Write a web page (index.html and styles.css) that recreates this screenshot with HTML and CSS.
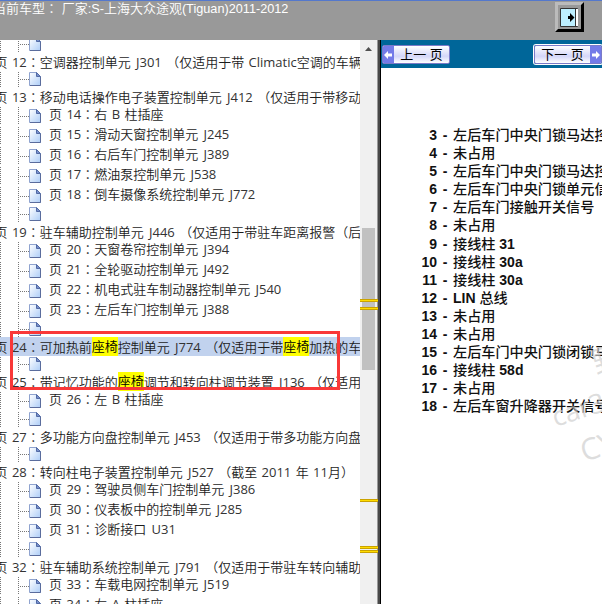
FILE: index.html
```html
<!DOCTYPE html>
<html lang="zh-CN">
<head>
<meta charset="utf-8">
<title>Tiguan</title>
<link rel="stylesheet" href="styles.css">
</head>
<body>
<header class="top"><span class="model">当前车型<span class="colon" lang="zh-TW">：</span> 厂家<b>:S-</b>上海大众途观<b>(Tiguan)2011-2012</b></span>
<button class="exit" aria-label="Exit"><svg width="19" height="19"><path fill="#bdefff" stroke="#333" d="M.5.5h17v18H.5z"/><path fill="#fff" d="M15 1h3v17h-3z"/><path stroke="#333" d="M15.500 1v17"/><path d="M8 8h2V5l4.500 4.500L10 14v-3H8z"/></svg></button></header>
<main class="panes">
<nav class="tree" id="tree"></nav>
<div class="scroll"><svg class="up" width="17" height="17"><path fill="#505050" d="M5 11l3.500-4 3.500 4z"/></svg><div class="thumb"></div><i class="hit h1"></i><i class="hit h2"></i><i class="hit h3"></i><i class="hit h4"></i><i class="hit h5"></i></div>
<div class="split"></div>
<section class="doc">
<div class="bar"><button class="pg prev"><svg width="11" height="18"><path fill="#747be8" d="M0 0h11v18H0z"/><path fill="#fff" d="M1 9l4-4v2.500h4v3H5V13z"/></svg><span>上一 页</span></button><button class="pg next"><span>下一 页</span><svg width="11" height="18"><path fill="#747be8" d="M0 0h11v18H0z"/><path fill="#fff" d="M10 9L6 5v2.500H2v3h4V13z"/></svg></button></div>
<ol class="pins" id="pins"></ol>
<div class="mark m1">野</div><div class="mark m2">car3</div><div class="mark m3">CY</div>
</section>
</main>
<div class="frame"></div>
<script src="tree.js"></script>
</body>
</html>
```
FILE: styles.css
```css
*{box-sizing:border-box}
body{margin:0;width:602px;height:604px;overflow:hidden;position:relative;background:#fff;display:flex;flex-direction:column}
.top{height:40px;flex:none;background:#999;border-top:1px solid #5478cc;color:#fff;display:flex;justify-content:space-between;align-items:flex-start;padding-right:18px;overflow:hidden}
.model{font:13px/16px "Liberation Sans","Noto Sans CJK SC",sans-serif;font-weight:350;margin:-1px 0 0 -7px;white-space:nowrap}
.model b{font:12.7px/16px "Liberation Sans",sans-serif}
.exit{width:29px;height:30px;margin-top:1px;padding:0;background:#999;border:solid;border-width:3px;border-color:#bbb #000 #000 #bbb;display:flex;align-items:center;justify-content:center}
.panes{display:flex;flex:1;min-height:0}
.tree{width:360px;flex:none;overflow:hidden;font:13px/19px "Open Sans","Noto Sans CJK SC",sans-serif;font-weight:350;color:#1c1c1c;white-space:nowrap;word-spacing:1px}
.tree p{margin:0}
.tree i{font-style:normal;font-weight:400;color:#333}
.tree i.w{margin-left:.8px}
.colon{font-family:"Noto Sans CJK TC",sans-serif}
.head{height:19px}
.head .t{margin-left:-5.5px}
.on{background:#c1d2ee}
mark{background:#ff0;color:#000;display:inline-block;height:19px;vertical-align:top}
.leaf,.empty{display:flex}
.leaf{height:20px;line-height:15px}
.empty{height:16px}
.empty:first-child{margin-top:-4px}
.leaf .t{margin-left:8px}
.tree svg{flex:none}
.scroll{width:17px;background:#f0f0f0;position:relative;flex:none}
.up{display:block}
.thumb{margin:171px 2px 0;height:142px;background:#c1c1c1}
.hit{position:absolute;left:0;width:18px;height:3px;background:#ffdc00;border:solid #caa200;border-width:1px 0}
.h1{top:259px}.h2{top:267px}.h3{top:459px}.h4{top:506px}.h5{top:510px}
.split{width:4px;flex:none;background:linear-gradient(90deg,#999 1px,#484848 1px 3px,#000 3px)}
.doc{flex:1;min-width:0;overflow:hidden;position:relative}
.bar{height:28px;background:#069;display:flex;justify-content:space-between;padding:5px 0 0 1px}
.pg{width:68px;height:19px;padding:0;border:1px solid #7a7ac8;border-radius:2px;background:linear-gradient(#fff,#d4d6f8 60%,#fff);display:flex;align-items:center;font:13px/17px "Liberation Sans","Noto Sans CJK SC",sans-serif;color:#000;overflow:hidden}
.next{box-shadow:0 0 0 1px #fff}
.pg span{flex:1;text-align:center;white-space:nowrap}
.pins{list-style:none;margin:58px 0 0;padding:0;font:bold 14px/18.1px "Liberation Sans","Noto Sans CJK SC",sans-serif;color:#111;white-space:nowrap}
.pins li{display:flex;height:18.1px}
.pins span{flex:none}
.num{width:56px;text-align:right}
.dash{width:16px;text-align:center}
.pins em{font-style:normal;font-weight:500;font-size:14.15px}
.mark{position:absolute;font:30px/34px "Open Sans","Noto Sans CJK SC",sans-serif;color:#ccca;transform:rotate(-18deg);white-space:nowrap}
.m1{left:211px;top:302px}.m2{left:170px;top:352px;font-size:27px}.m3{left:199px;top:389px}
.frame{position:absolute;left:10px;top:331px;width:330px;height:59px;border:3px solid #f93838}
```
FILE: tree.js
```javascript
const rows = [
  [''],
  ['h', 12, '空调器控制单元 J301 （仅适用于带 Climatic空调的车辆'], [''],
  ['h', 13, '移动电话操作电子装置控制单元 J412 （仅适用于带移动'],
  ['l', 14, '右 B 柱插座'], ['l', 15, '滑动天窗控制单元 J245'], ['l', 16, '右后车门控制单元 J389'],
  ['l', 17, '燃油泵控制单元 J538'], ['l', 18, '倒车摄像系统控制单元 J772'], [''],
  ['h', 19, '驻车辅助控制单元 J446 （仅适用于带驻车距离报警（后'],
  ['l', 20, '天窗卷帘控制单元 J394'], ['l', 21, '全轮驱动控制单元 J492'],
  ['l', 22, '机电式驻车制动器控制单元 J540'], ['l', 23, '左后车门控制单元 J388'], [''],
  ['s', 24, '可加热前座椅控制单元 J774 （仅适用于带座椅加热的车'], [''],
  ['h', 25, '带记忆功能的座椅调节和转向柱调节装置 J136 （仅适用'],
  ['l', 26, '左 B 柱插座'], [''],
  ['h', 27, '多功能方向盘控制单元 J453 （仅适用于带多功能方向盘'], [''],
  ['h', 28, '转向柱电子装置控制单元 J527 （截至 2011 年 11月）'],
  ['l', 29, '驾驶员侧车门控制单元 J386'], ['l', 30, '仪表板中的控制单元 J285'], ['l', 31, '诊断接口 U31'], [''],
  ['h', 32, '驻车辅助系统控制单元 J791 （仅适用于带驻车转向辅助'],
  ['l', 33, '车载电网控制单元 J519'], ['l', 34, '左 A 柱插座']
];
const icon = y => `<svg width="41" height="${y === 3 ? 20 : 16}">
<path d="M.5 1v${y === 3 ? 18 : 15}M18.500 1v${y === 3 ? 18 : 15}M20 ${y + 7.5}h9" stroke="#777" stroke-dasharray="1 1" fill="none"/>
<g transform="translate(29 ${y})"><path d="M.5.5h7l4 4v9H.5z" fill="url(#paper)" stroke="#8fa3cf"/><path d="M7.500.5v4h4z" fill="#7891cc" stroke="#526aa5"/><path d="M1 13.500h10.500V5" stroke="#5a6c9c" fill="none"/></g></svg>`;
const wrap = s => s.replace(/[A-Za-z0-9]+/g, m => `<i${/^[JU]/.test(m) ? ' class="w"' : ''}>${m}</i>`)
  .replaceAll('座椅', '<mark>座椅</mark>').replace(/（/g, '<span class="colon" lang="zh-TW">（</span>');
document.getElementById('tree').innerHTML =
  rows.map(([k, n, t]) => {
    if (!k) return `<p class="empty">${icon(1)}</p>`;
    const text = `<span class="t">页 <i>${n}</i><span class="colon" lang="zh-TW">：</span>${wrap(t)}</span>`;
    return k === 'l' ? `<p class="leaf">${icon(3)}${text}</p>` : `<p class="head${k === 's' ? ' on' : ''}">${text}</p>`;
  }).join('') +
  '<svg width="0" height="0"><linearGradient id="paper" x2="1" y2="1"><stop stop-color="#fff"/><stop offset="1" stop-color="#adcdf7"/></linearGradient></svg>';
const pins = ['左后车门中央门锁马达控', '未占用', '左后车门中央门锁马达控', '左后车门中央门锁单元信', '左后车门接触开关信号', '未占用',
  '接线柱 31', '接线柱 30a', '接线柱 30a', 'LIN 总线', '未占用', '未占用', '左后车门中央门锁闭锁马', '接线柱 58d', '未占用', '左后车窗升降器开关信号'];
document.getElementById('pins').innerHTML = pins.map((t, i) =>
  `<li><span class="num">${i + 3}</span><span class="dash">-</span><span>${t.replace(/[\u4e00-\u9fff]+/g, '<em>$&</em>')}</span></li>`).join('');
```
